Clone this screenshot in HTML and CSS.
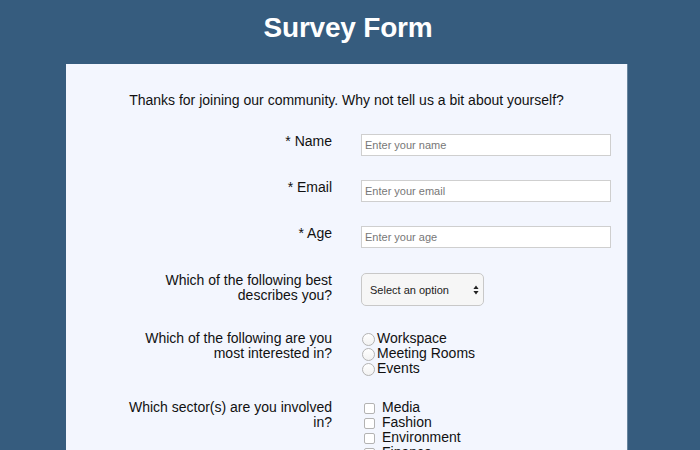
FILE: index.html
```
<!DOCTYPE html>
<html lang="en">
<head>
<meta charset="utf-8">
<title>Survey Form</title>
<link rel="stylesheet" href="styles.css">
</head>
<body>
<h1 class="title">Survey Form</h1>
<main class="card">
  <p class="intro">Thanks for joining our community. Why not tell us a bit about yourself?</p>
  <form class="grid">
    <label class="lbl" for="name">* Name</label>
    <input class="field" id="name" type="text" placeholder="Enter your name">

    <label class="lbl" for="email">* Email</label>
    <input class="field" id="email" type="email" placeholder="Enter your email">

    <label class="lbl" for="age">* Age</label>
    <input class="field" id="age" type="number" placeholder="Enter your age">

    <label class="lbl lbl-select" for="role">Which of the following best describes you?</label>
    <div class="select-wrap">
      <select class="select" id="role">
        <option>Select an option</option>
      </select>
      <svg class="arrows" width="6" height="10" viewBox="0 0 6 10"><path d="M3 0.5 L5.6 4 L0.4 4 Z M3 9.5 L5.6 6 L0.4 6 Z" fill="#222"/></svg>
    </div>

    <div class="lbl">Which of the following are you most interested in?</div>
    <div class="list">
      <label class="opt"><input class="radio" type="radio" name="interest">Workspace</label>
      <label class="opt"><input class="radio" type="radio" name="interest">Meeting Rooms</label>
      <label class="opt"><input class="radio" type="radio" name="interest">Events</label>
    </div>

    <div class="lbl">Which sector(s) are you involved in?</div>
    <div class="list">
      <label class="opt"><input class="check" type="checkbox">Media</label>
      <label class="opt"><input class="check" type="checkbox">Fashion</label>
      <label class="opt"><input class="check" type="checkbox">Environment</label>
      <label class="opt"><input class="check" type="checkbox">Finance</label>
    </div>
  </form>
</main>
</body>
</html>
```
FILE: styles.css
```
html, body {
  margin: 0;
  padding: 0;
}
body {
  background: #365c7e;
  font-family: "Liberation Sans", Arial, Helvetica, sans-serif;
  color: #111;
  height: 450px;
  overflow: hidden;
}
.title {
  margin: 0 0 20px 0;
  padding-top: 12px;
  padding-right: 4px;
  font-size: 28px;
  line-height: 32px;
  font-weight: bold;
  color: #fff;
  text-align: center;
  letter-spacing: -0.2px;
}
.card {
  width: 545px;
  margin-left: 66px;
  padding: 28px 16px 40px 0;
  background: #f3f6fe;
  box-shadow: 1px 0 0 rgba(255,255,255,0.25);
}
.intro {
  margin: 0 0 26px 0;
  padding-left: 16px;
  font-size: 14px;
  line-height: 16px;
  text-align: center;
}
.grid {
  display: grid;
  grid-template-columns: 266px 250px;
  column-gap: 29px;
  row-gap: 24px;
  align-items: start;
}
.lbl {
  font-size: 14px;
  line-height: 15px;
  text-align: right;
  padding-left: 56px;
}
.lbl-select {
  margin-top: 1px;
}
.field {
  box-sizing: border-box;
  width: 250px;
  height: 22px;
  margin: 0;
  padding: 0 3px;
  border: 1px solid #cfcfcf;
  background: #fff;
  font-family: "Liberation Sans", Arial, sans-serif;
  font-size: 11px;
  outline: none;
}
.field::placeholder {
  color: #777;
}
.select-wrap {
  position: relative;
  width: 123px;
  height: 33px;
  margin: 1px 0 1px 0;
}
.select {
  appearance: none;
  -webkit-appearance: none;
  box-sizing: border-box;
  width: 123px;
  height: 33px;
  margin: 0;
  padding: 0 0 0 8px;
  border: 1px solid #c8c8c8;
  border-radius: 5px;
  background: #f6f6f6;
  font-family: "Liberation Sans", Arial, sans-serif;
  font-size: 11px;
  color: #222;
}
.arrows {
  position: absolute;
  right: 5px;
  top: 12px;
}
.list {
  display: flex;
  flex-direction: column;
  font-size: 14px;
  line-height: 15px;
}
.opt {
  display: flex;
  align-items: center;
  height: 15px;
}
.radio {
  appearance: none;
  -webkit-appearance: none;
  box-sizing: border-box;
  width: 13px;
  height: 13px;
  margin: 2px 2px 0 1px;
  border: 1px solid #b3b3b3;
  border-radius: 50%;
  background: linear-gradient(#fff, #f2f2f2);
  flex: none;
}
.check {
  appearance: none;
  -webkit-appearance: none;
  box-sizing: border-box;
  width: 11px;
  height: 11px;
  margin: 2px 7px 0 3px;
  border: 1px solid #b3b3b3;
  border-radius: 2px;
  background: #fff;
  flex: none;
}
```
